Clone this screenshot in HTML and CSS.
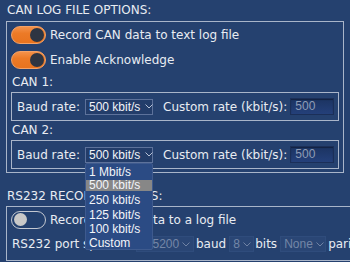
FILE: index.html
```html
<!DOCTYPE html>
<html>
<head>
<meta charset="utf-8">
<link rel="stylesheet" href="styles.css">
</head>
<body>
<div class="page">
  <div class="title">CAN LOG FILE OPTIONS:</div>
  <div class="group can-group">
    <div class="toggle-row">
      <span class="toggle on"><span class="knob"></span></span>
      <span>Record CAN data to text log file</span>
    </div>
    <div class="toggle-row">
      <span class="toggle on"><span class="knob"></span></span>
      <span>Enable Acknowledge</span>
    </div>
    <div class="sub-label">CAN 1:</div>
    <div class="bus-box">
      <span class="baud-label">Baud rate:</span>
      <div class="select"><span>500 kbit/s</span><svg class="chev" width="8" height="5" viewBox="0 0 8 5"><path d="M0.5 0.5 L4 4 L7.5 0.5" fill="none" stroke="#b7c2d6" stroke-width="1"/></svg></div>
      <span class="custom-label">Custom rate (kbit/s):</span>
      <div class="input">500</div>
    </div>
    <div class="sub-label second">CAN 2:</div>
    <div class="bus-box">
      <span class="baud-label">Baud rate:</span>
      <div class="select"><span>500 kbit/s</span><svg class="chev" width="8" height="5" viewBox="0 0 8 5"><path d="M0.5 0.5 L4 4 L7.5 0.5" fill="none" stroke="#b7c2d6" stroke-width="1"/></svg></div>
      <span class="custom-label">Custom rate (kbit/s):</span>
      <div class="input">500</div>
    </div>
  </div>
  <div class="title title2">RS232 RECORD OPTIONS:</div>
  <div class="group rs-group">
    <div class="toggle-row">
      <span class="toggle off"><span class="knob"></span></span>
      <span>Record RS232 data to a log file</span>
    </div>
    <div class="port-row">
      <span class="speed-label">RS232 port speed:</span>
      <div class="dsel w-speed"><span>115200</span><svg class="chev" width="8" height="5" viewBox="0 0 8 5"><path d="M0.5 0.5 L4 4 L7.5 0.5" fill="none" stroke="#6f82a4" stroke-width="1"/></svg></div>
      <span class="lbl-baud">baud</span>
      <div class="dsel w-bits"><span>8</span><svg class="chev" width="8" height="5" viewBox="0 0 8 5"><path d="M0.5 0.5 L4 4 L7.5 0.5" fill="none" stroke="#6f82a4" stroke-width="1"/></svg></div>
      <span class="lbl-bits">bits</span>
      <div class="dsel w-par"><span>None</span><svg class="chev" width="8" height="5" viewBox="0 0 8 5"><path d="M0.5 0.5 L4 4 L7.5 0.5" fill="none" stroke="#6f82a4" stroke-width="1"/></svg></div>
      <span class="lbl-par">parity</span>
    </div>
  </div>
  <ul class="popup">
    <li>1 Mbit/s</li>
    <li class="hl">500 kbit/s</li>
    <li>250 kbit/s</li>
    <li>125 kbit/s</li>
    <li>100 kbit/s</li>
    <li>Custom</li>
  </ul>
</div>
</body>
</html>
```

FILE: styles.css
```css
html, body {
  margin: 0;
  padding: 0;
}
body {
  width: 350px;
  height: 262px;
  overflow: hidden;
  background: #25416f;
  color: #e8ecf2;
  font-family: "DejaVu Sans", sans-serif;
  font-size: 12px;
}
.page {
  position: relative;
  padding-left: 6px;
  width: 344px;
  height: 262px;
}
.title {
  height: 21px;
  line-height: 21px;
  padding-left: 1px;
  white-space: nowrap;
}
.title2 {
  margin-top: 14px;
  height: 19px;
  line-height: 19px;
}
.group {
  border: 1px solid #a9b5c9;
  box-sizing: border-box;
  padding: 0 4px;
}
.can-group {
  width: 338px;
  height: 152px;
}
.rs-group {
  width: 420px;
  height: 55px;
}
.toggle-row {
  height: 25px;
  display: flex;
  align-items: center;
  gap: 4px;
  white-space: nowrap;
}
.toggle {
  width: 35px;
  height: 18px;
  border-radius: 9px;
  box-sizing: border-box;
  display: flex;
  align-items: center;
  flex: none;
}
.toggle.on {
  background: linear-gradient(#f3914a, #ec7a27 40%, #e8731f);
  border: 1px solid #f5a266;
  justify-content: flex-end;
  padding-right: 1px;
}
.toggle.on .knob {
  width: 14px;
  height: 14px;
  border-radius: 50%;
  background: #2e3542;
}
.toggle.off {
  border: 1px solid #c3c8d1;
  background: #23406e;
  padding-left: 2px;
}
.toggle.off .knob {
  width: 13px;
  height: 13px;
  border-radius: 50%;
  background: #c8c8c8;
}
.sub-label {
  height: 20px;
  line-height: 20px;
  padding-left: 1px;
}
.sub-label.second {
  height: 19px;
  line-height: 19px;
}
.bus-box {
  border: 1px solid #a9b5c9;
  height: 29px;
  box-sizing: border-box;
  display: flex;
  align-items: center;
  padding-left: 5px;
  white-space: nowrap;
}
.baud-label {
  width: 68px;
  flex: none;
}
.select {
  width: 68px;
  height: 16px;
  box-sizing: border-box;
  border: 1px solid #5d729b;
  background: #233d6a;
  display: flex;
  align-items: center;
  gap: 5px;
  padding: 0 0 0 3px;
  font-family: "Liberation Sans", sans-serif;
  font-size: 12px;
  color: #f2f4f8;
}
.chev {
  display: block;
  flex: none;
}
.custom-label {
  margin-left: 10px;
}
.input {
  margin-left: 3px;
  width: 44px;
  height: 17px;
  box-sizing: border-box;
  border: 1px solid #1b2f58;
  background: linear-gradient(#1c3462, #24407a);
  box-shadow: inset 0 1px 1px rgba(0,0,0,0.35);
  color: #8f9db6;
  font-family: "Liberation Sans", sans-serif;
  font-size: 12px;
  line-height: 15px;
  padding-left: 4px;
}
.port-row {
  height: 24px;
  display: flex;
  align-items: center;
  white-space: nowrap;
  padding-left: 1px;
}
.speed-label {
  width: 124px;
  flex: none;
}
.dsel {
  height: 16px;
  box-sizing: border-box;
  background: #2a4675;
  border: 1px solid #2f4c7c;
  display: flex;
  align-items: center;
  gap: 3px;
  padding: 0 0 0 3px;
  font-family: "Liberation Sans", sans-serif;
  font-size: 12px;
  color: #7486a7;
  flex: none;
}
.w-speed { width: 58px; }
.w-bits { width: 25px; margin-left: 3px; }
.w-par { width: 46px; margin-left: 3px; }
.lbl-baud { margin-left: 2px; }
.lbl-bits { margin-left: 1px; }
.lbl-par { margin-left: 2px; }
.popup {
  position: absolute;
  left: 85px;
  top: 163px;
  width: 68px;
  height: 87px;
  box-sizing: border-box;
  margin: 0;
  padding: 1px 0 0 0;
  list-style: none;
  background: #2b4b84;
  border: 1px solid #3e5a8e;
  border-radius: 2px;
  font-family: "Liberation Sans", sans-serif;
  font-size: 12px;
  color: #f3f5f9;
}
.popup li {
  height: 14.2px;
  line-height: 14.2px;
  padding-left: 3px;
  white-space: nowrap;
}
.popup li.hl {
  background: #878787;
  background-clip: padding-box;
  border-top: 1px solid transparent;
  border-bottom: 2px solid transparent;
  height: 11.2px;
  line-height: 11.2px;
}
```
